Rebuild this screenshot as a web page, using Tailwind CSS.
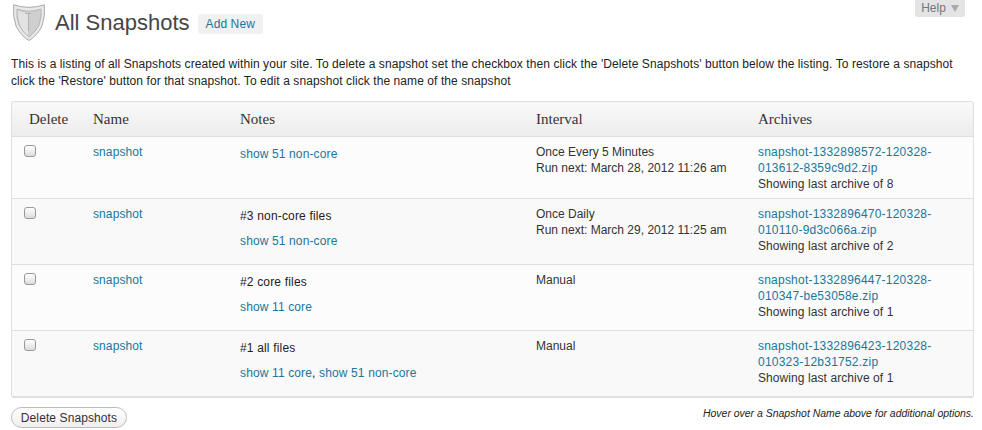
<!DOCTYPE html>
<html>
<head>
<meta charset="utf-8">
<script src="https://cdn.jsdelivr.net/npm/@tailwindcss/browser@4"></script>
</head>
<body class="bg-white font-['Liberation_Sans',Arial,sans-serif] text-[12px] leading-[16px] text-[#333] overflow-hidden">
<div class="relative w-[982px] h-[430px] overflow-hidden pl-[11px] pr-[8px]">
  <div class="absolute right-[17px] top-[-6px] w-[50px] h-[23px] bg-[#e4e4e4] rounded-b-[3px] text-[#777] flex items-end justify-center gap-[5px] pb-[1px]"><span>Help</span><span class="w-0 h-0 mb-[4px] border-x-[4px] border-x-transparent border-t-[7px] border-t-[#aaa]"></span></div>
  <div class="flex items-center h-[46px]">
    <svg class="w-[32px] h-[37px] ml-[2px] self-start mt-[4px]" viewBox="0 0 32 37">
      <path d="M0.7 0.8 Q16 6 31.3 0.8 Q32.5 12 29 22 Q24 32 16 36.5 Q8 32 3 22 Q-0.5 12 0.7 0.8Z" fill="#e9e9e9" stroke="#a9a9a9" stroke-width="1"/>
      <path d="M4 5 Q16 9.5 28 5 Q29 13 26 21 Q22 29 16 33 Q10 29 6 21 Q3 13 4 5Z" fill="#cfcfcf" stroke="#b5b5b5" stroke-width="1"/>
      <path d="M5 6.5 Q10 8.5 15 9 V31.5 Q10 28 7 20.5 Q4.5 13 5 6.5Z" fill="#e2e2e2"/>
      <path d="M12 9.5 H18 M15.5 9.5 V27" stroke="#ababab" stroke-width="0.8" fill="none"/>
    </svg>
    <h1 class="ml-[10px] text-[22px] leading-[30px] text-[#464646] font-normal">All Snapshots</h1>
    <a class="ml-[8px] mt-[1px] h-[20px] px-[8px] rounded-[3px] bg-[#f1f1f1] text-[#21759b] text-[12px] leading-[20px] tracking-[0.1px]">Add New</a>
  </div>
  <p class="mt-[10px] w-[955px] text-[#222] text-[12px] leading-[17px] tracking-[0.08px]">This is a listing of all Snapshots created within your site. To delete a snapshot set the checkbox then click the 'Delete Snapshots' button below the listing. To restore a snapshot click the 'Restore' button for that snapshot. To edit a snapshot click the name of the snapshot</p>
  <div class="mt-[11px] w-[963px] border border-[#dfdfdf] rounded-[3px] bg-[#f9f9f9] border-b-2">
    <div class="grid grid-cols-[73px_147px_296px_222px_1fr] h-[35px] items-center border-b border-[#dfdfdf] bg-gradient-to-b from-[#f9f9f9] to-[#ececec] font-['Liberation_Serif',serif] text-[15px] text-[#333] rounded-t-[3px]">
      <div class="pl-[17px]">Delete</div><div class="pl-[8px]">Name</div><div class="pl-[8px]">Notes</div><div class="pl-[8px]">Interval</div><div class="pl-[8px]">Archives</div>
    </div>
    <div class="grid grid-cols-[73px_147px_296px_222px_1fr] h-[62px] border-b border-[#dfdfdf] pt-[7px] bg-[#fcfcfc]">
      <div class="pl-[12px] pt-[1px]"><span class="block w-[12px] h-[12px] rounded-[3px] border border-[#999] bg-gradient-to-b from-white to-[#dcdcdc]"></span></div>
      <div class="pl-[8px]"><a class="text-[#21759b] tracking-[0.1px]">snapshot</a></div>
      <div class="pl-[8px] pt-[2px]"><a class="text-[#21759b] tracking-[0.13px]">show 51 non-core</a></div>
      <div class="pl-[8px]">Once Every 5 Minutes<br>Run next: March 28, 2012 11:26 am</div>
      <div class="pl-[8px]"><a class="text-[#21759b] tracking-[0.22px]">snapshot-1332898572-120328-<br>013612-8359c9d2.zip</a><br><span class="tracking-[0.08px]">Showing last archive of 8</span></div>
    </div>
    <div class="grid grid-cols-[73px_147px_296px_222px_1fr] h-[66px] border-b border-[#dfdfdf] pt-[7px] bg-[#f9f9f9]">
      <div class="pl-[12px] pt-[1px]"><span class="block w-[12px] h-[12px] rounded-[3px] border border-[#999] bg-gradient-to-b from-white to-[#dcdcdc]"></span></div>
      <div class="pl-[8px]"><a class="text-[#21759b] tracking-[0.1px]">snapshot</a></div>
      <div class="pl-[8px] pt-[2px] text-[#222] tracking-[0.17px]">#3 non-core files<div class="mt-[9px]"><a class="text-[#21759b] tracking-[0.13px]">show 51 non-core</a></div></div>
      <div class="pl-[8px]">Once Daily<br>Run next: March 29, 2012 11:25 am</div>
      <div class="pl-[8px]"><a class="text-[#21759b] tracking-[0.22px]">snapshot-1332896470-120328-<br>010110-9d3c066a.zip</a><br><span class="tracking-[0.08px]">Showing last archive of 2</span></div>
    </div>
    <div class="grid grid-cols-[73px_147px_296px_222px_1fr] h-[66px] border-b border-[#dfdfdf] pt-[7px] bg-[#fcfcfc]">
      <div class="pl-[12px] pt-[1px]"><span class="block w-[12px] h-[12px] rounded-[3px] border border-[#999] bg-gradient-to-b from-white to-[#dcdcdc]"></span></div>
      <div class="pl-[8px]"><a class="text-[#21759b] tracking-[0.1px]">snapshot</a></div>
      <div class="pl-[8px] pt-[2px] text-[#222] tracking-[0.17px]">#2 core files<div class="mt-[9px]"><a class="text-[#21759b] tracking-[0.13px]">show 11 core</a></div></div>
      <div class="pl-[8px]">Manual</div>
      <div class="pl-[8px]"><a class="text-[#21759b] tracking-[0.22px]">snapshot-1332896447-120328-<br>010347-be53058e.zip</a><br><span class="tracking-[0.08px]">Showing last archive of 1</span></div>
    </div>
    <div class="grid grid-cols-[73px_147px_296px_222px_1fr] h-[65px] pt-[7px] bg-[#f9f9f9]">
      <div class="pl-[12px] pt-[1px]"><span class="block w-[12px] h-[12px] rounded-[3px] border border-[#999] bg-gradient-to-b from-white to-[#dcdcdc]"></span></div>
      <div class="pl-[8px]"><a class="text-[#21759b] tracking-[0.1px]">snapshot</a></div>
      <div class="pl-[8px] pt-[2px] text-[#222] tracking-[0.17px]">#1 all files<div class="mt-[9px]"><a class="text-[#21759b] tracking-[0.13px]">show 11 core</a>, <a class="text-[#21759b] tracking-[0.13px]">show 51 non-core</a></div></div>
      <div class="pl-[8px]">Manual</div>
      <div class="pl-[8px]"><a class="text-[#21759b] tracking-[0.22px]">snapshot-1332896423-120328-<br>010323-12b31752.zip</a><br><span class="tracking-[0.08px]">Showing last archive of 1</span></div>
    </div>
  </div>
  <div class="mt-[9px] w-[963px] flex justify-between items-start">
    <button class="h-[21px] w-[116px] rounded-full border border-[#bbb] bg-gradient-to-b from-white to-[#efefef] text-[12px] leading-[18px] text-[#333] tracking-[0.1px]">Delete Snapshots</button>
    <em class="text-[10.45px] leading-[12px] text-[#222] pt-[1px]">Hover over a Snapshot Name above for additional options.</em>
  </div>
</div>
</body>
</html>
